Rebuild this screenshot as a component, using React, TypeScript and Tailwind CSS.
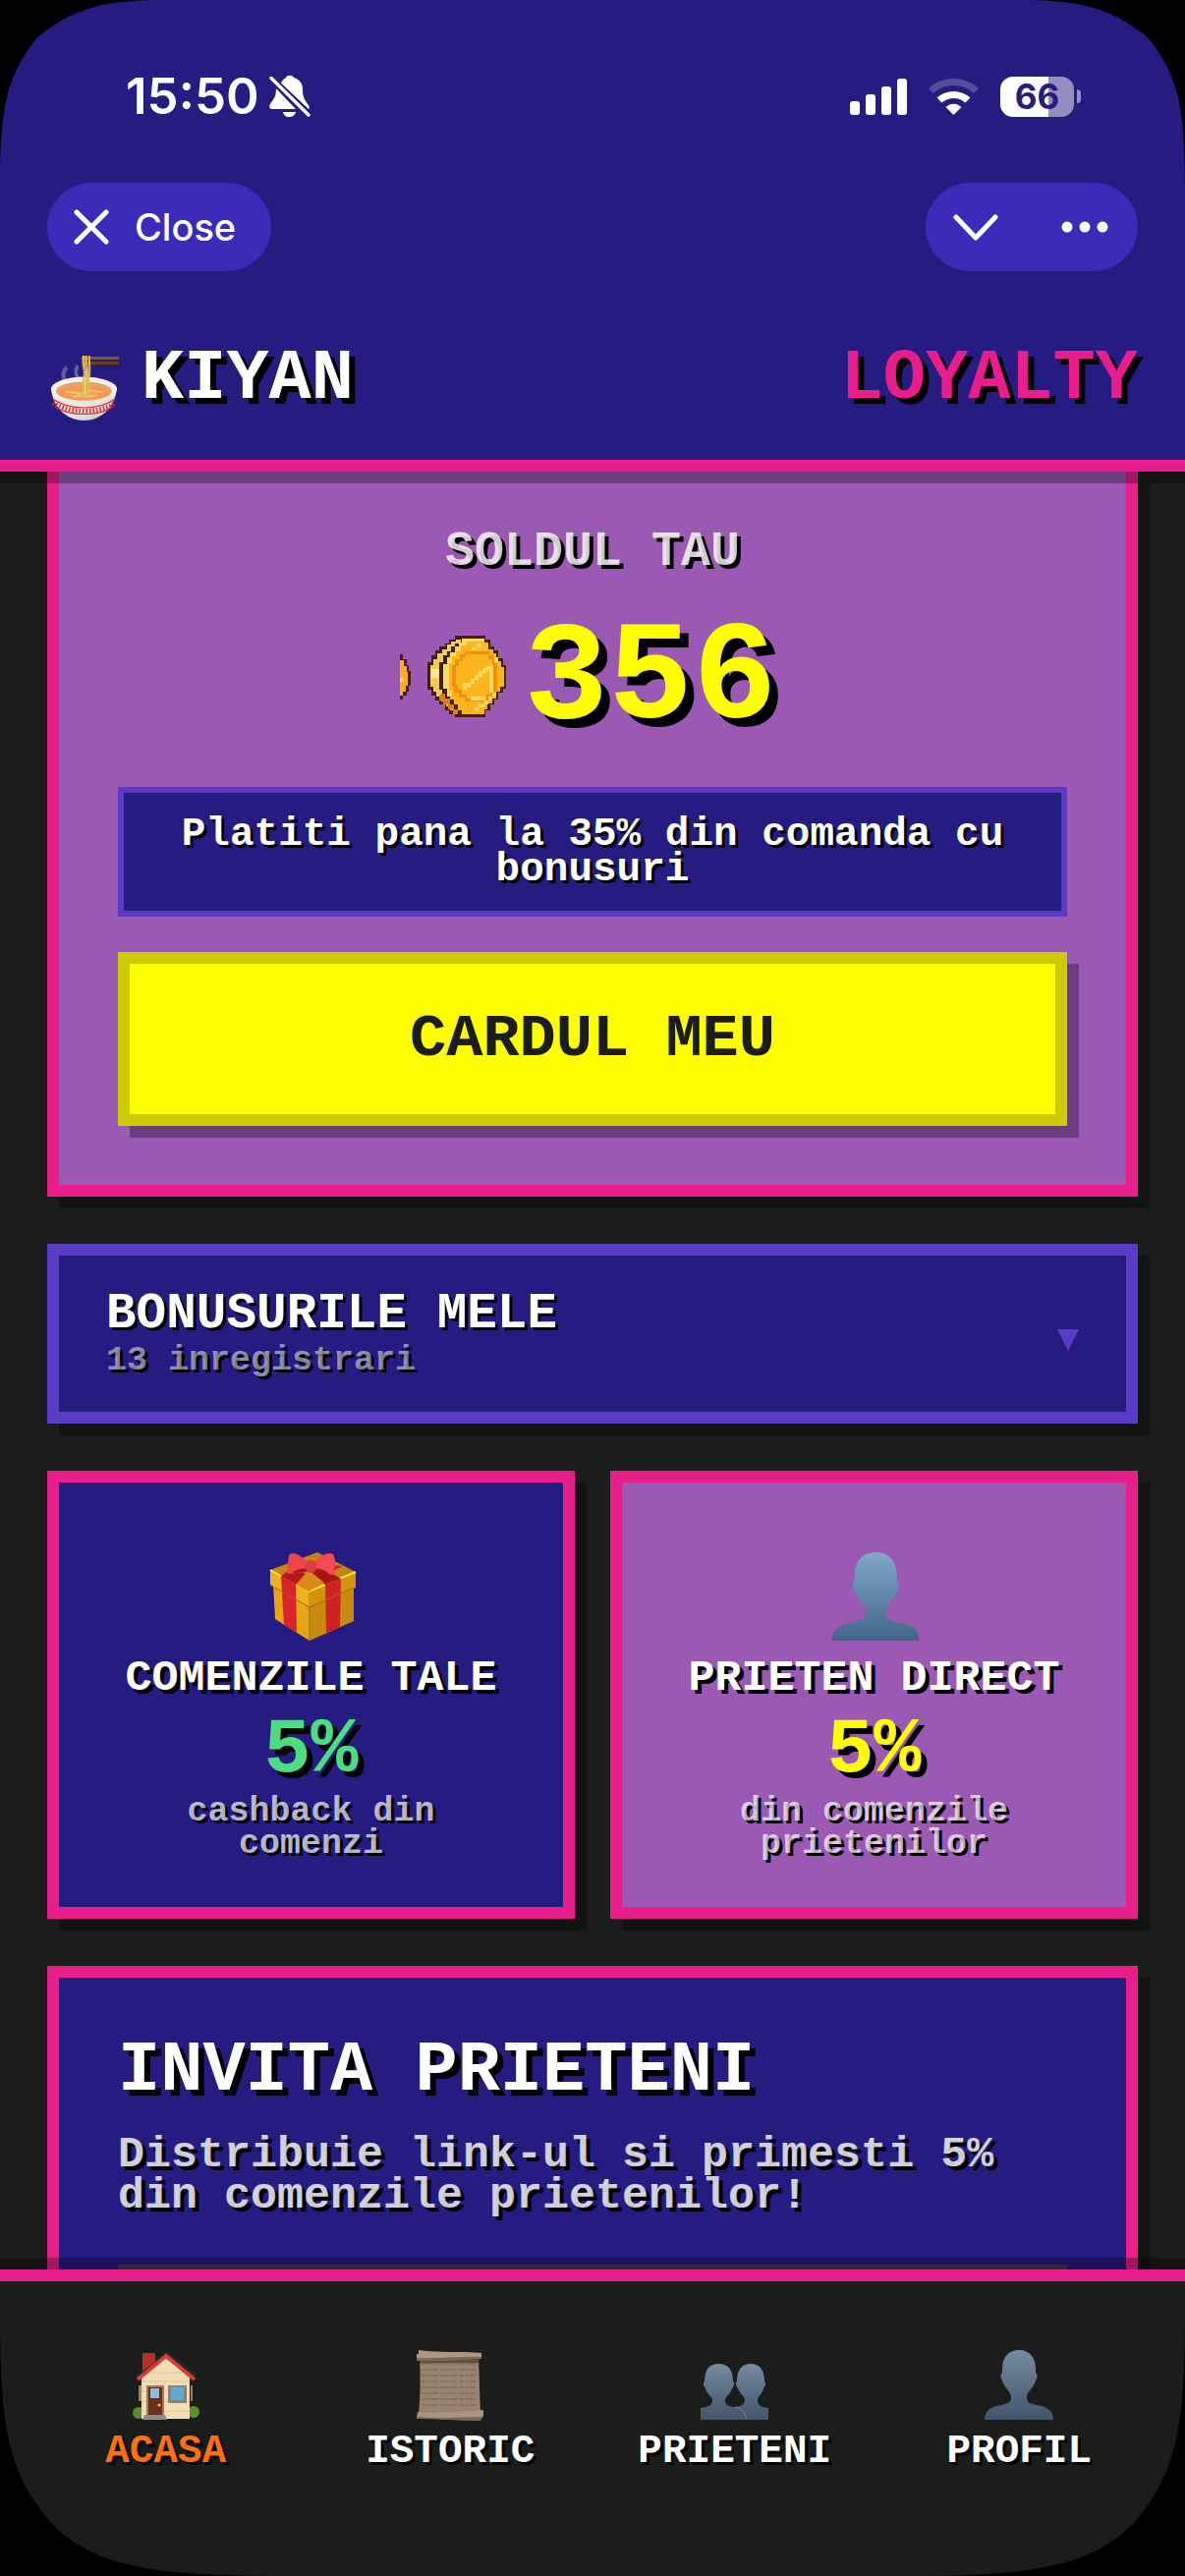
import { useState } from 'react';
import type { ReactNode } from 'react';

const PIXEL = "font-['Liberation_Mono','DejaVu_Sans_Mono',monospace] font-bold";

function BellOff() {
  return (
    <svg className="h-11 w-[42px]" viewBox="0 0 42 44" fill="#fff" aria-hidden="true">
      <path d="M12 9C13 5 16 4 17 3C18 0 24 0 25 3C31 5 34 9 34 15C34 24 37 27 40 31C41 33 41 34 40 35Z" />
      <path d="M7 14C7 24 3 26 1 30C-1 34 1 35 3 35H27Z" />
      <path d="M14 38H27C26 42 23 43 20 43C17 43 15 42 14 38Z" />
      <path d="M2 3.500L40 41" stroke="#261b81" strokeWidth="7" />
      <path d="M2 3.500L40 41" stroke="#fff" strokeWidth="3.400" strokeLinecap="round" />
    </svg>
  );
}

function Signal() {
  return (
    <svg className="h-[38px] w-[58px]" viewBox="0 0 58 38" fill="#fff" aria-hidden="true">
      <rect x="0" y="24" width="10" height="14" rx="3" />
      <rect x="16" y="17" width="10" height="21" rx="3" />
      <rect x="32" y="9" width="10" height="29" rx="3" />
      <rect x="48" y="1" width="10" height="37" rx="3" />
    </svg>
  );
}

function Wifi() {
  return (
    <svg className="h-[38px] w-[51px]" viewBox="0 0 51 38" fill="none" aria-hidden="true">
      <path d="M2.500 13.500C15 1.500 36 1.500 48.500 13.500" stroke="#fff" strokeOpacity=".22" strokeWidth="7" />
      <path d="M11 23C19 15.500 32 15.500 40 23" stroke="#fff" strokeWidth="7" />
      <path d="M17.500 30C22 25.500 29 25.500 33.500 30L25.500 38Z" fill="#fff" />
    </svg>
  );
}

function Battery() {
  return (
    <div className="flex items-center gap-[3px]">
      <div className="flex h-[41px] w-[75px] items-center justify-center rounded-[13px] bg-[linear-gradient(90deg,#fff_66%,#958dc0_66%)] font-['Inter',sans-serif] text-[35px] leading-none font-bold text-[#261b81]">
        66
      </div>
      <div className="h-3.5 w-1 rounded-r-full bg-[#958dc0]" />
    </div>
  );
}

function Bowl() {
  return (
    <svg className="h-[84px] w-[72px] overflow-visible" viewBox="-2 0 72 84" aria-hidden="true">
      <defs>
        <linearGradient id="bowl" x1="0" x2="1" y1="0" y2="1">
          <stop offset="0" stopColor="#f4f4f4" />
          <stop offset=".6" stopColor="#e4e4e2" />
          <stop offset="1" stopColor="#b9b9b9" />
        </linearGradient>
      </defs>
      <path d="M18 30C13 35 14 41 17 45M29 28C26 33 27 39 31 43" stroke="#8c86c0" strokeOpacity=".6" strokeWidth="4" fill="none" />
      <path d="M2 51C3 70 18 84 35 84C53 84 67 71 69 51Z" fill="url(#bowl)" />
      <ellipse cx="35.500" cy="52" rx="33.500" ry="12.500" fill="#f1f1f0" />
      <ellipse cx="35.500" cy="54" rx="28.500" ry="9.500" fill="#e9a36a" />
      <ellipse cx="35.500" cy="56" rx="27" ry="7.500" fill="#f59a56" />
      <path d="M16 56C24 52 29 60 37 55S49 58 55 54M24 60C32 57 39 62 48 58" stroke="#f8c36c" strokeWidth="2" fill="none" />
      <path d="M33 19H71V22H33Z" fill="#8a5520" />
      <path d="M33 24H71V27H33Z" fill="#6d3f17" />
      <path d="M35 18C33 28 38 34 35 42C34 48 36 52 35 58M38 18C37 28 41 34 38 42C37 48 39 52 38 58M41 18C40 27 43 34 40 42L41 58" stroke="#e2bd4a" strokeWidth="2" fill="none" />
      <path d="M36 18C35 28 40 34 36 42L37 58" stroke="#f9e38a" strokeWidth="1" fill="none" />
      <path d="M4 62C20 74 51 74 67 62" stroke="#db2d36" strokeWidth="1.200" fill="none" />
      <path d="M4 66C20 77 51 77 66 67" stroke="#db2d36" strokeWidth="5" strokeDasharray="1.500 2" fill="none" />
      <path d="M6 70C20 80 51 80 65 70" stroke="#db2d36" strokeWidth="1.200" fill="none" />
    </svg>
  );
}

function Coin() {
  return (
    <svg className="h-[84px] w-[114px] overflow-visible" viewBox="0 3 114 84" shapeRendering="crispEdges" aria-hidden="true">
      <path d="M0 19H3V24H7V30H9V36H11V51H9V57H7V61H3V65H0Z" fill="#3a2408" />
      <path d="M0 25H4V31H7V37H8V51H6V57H3V61H0Z" fill="#fdae15" />
      <path d="M0 43H4V47H0Z" fill="#ffd766" />
      <path d="M56 0H87V4H92V11H96V15H100V23H105V30H108V54H105V58H100V65H96V70H92V76H87V83H56V80H50V76H46V70H40V66H36V61H32V55H28V27H32V20H36V15H40V11H46V8H50V4H56Z" fill="#3a2408" />
      <path d="M57 4H62V8H56V11H52V16H48V20H44V27H40V55H43V61H46V66H50V71H54V76H58V80H55V76H51V72H47V67H42V62H37V57H34V52H31V30H34V24H38V18H43V14H48V9H52V6H57Z" fill="#f5c95c" />
      <path d="M32 34H40V43H32Z" fill="#ffe6a0" />
      <path d="M42 59H46V64H51V70H55V75H59V80H54V75H49V70H44V66H40V61Z" fill="#e07c08" />
      <path d="M63 3H86V7H90V14H95V18H98V26H103V32H106V52H102V57H98V64H94V69H89V75H86V80H63V76H59V70H55V65H51V60H48V54H44V29H48V22H51V17H56V11H60V7H63Z" fill="#fdb51f" />
      <path d="M63 3H86V6H68V10H62V16H57V21H53V28H50V56H53V62H48V54H44V29H48V22H51V17H56V11H60V7H63Z" fill="#ffd766" />
      <path d="M66 16H92V20H96V28H99V56H96V62H91V67H66V63H60V58H55V52H53V30H56V24H61V19H66Z" fill="#ee920d" />
      <path d="M67 19H90V24H94V30H95V54H92V60H88V64H68V60H63V55H59V50H57V31H60V26H64V22H67Z" fill="#fdb51f" />
      <path d="M91 31H95V58H91ZM72 62H87V66H72ZM64 48H68V55H64ZM68 48H72V52H68ZM72 44H76V49H72ZM76 40H80V45H76ZM80 36H84V42H80ZM84 33H88V38H84ZM88 31H92V35H88Z" fill="#ffd766" />
      <path d="M94 58H98V62H94ZM90 62H94V66H90ZM86 66H90V70H86ZM80 70H86V73H80ZM76 73H80V77H76ZM73 12H78V15H73ZM78 8H83V12H78ZM96 22H100V27H96Z" fill="#ffd766" />
    </svg>
  );
}

function Gift() {
  return (
    <svg className="size-[90px] overflow-visible" viewBox="-2 0 90 90" aria-hidden="true">
      <path d="M4 33L41 52V90L6 68Z" fill="#e6a417" />
      <path d="M41 52L86 32V70L41 90Z" fill="#c98b0f" />
      <path d="M1 18L40 40V56L1 33Z" fill="#eeb01c" />
      <path d="M40 40L88 20V36L40 56Z" fill="#d2940f" />
      <path d="M49 0L88 20L40 40L1 18Z" fill="#bf8612" />
      <path d="M1 18L40 40L88 20" stroke="#ffe22e" strokeWidth="2" fill="none" />
      <path d="M12 24L27 33L28 82L15 74Z" fill="#d8242a" />
      <path d="M57 33L73 27L72 76L58 83Z" fill="#d02226" />
      <path d="M12 24L26 15L40 24L27 33Z" fill="#b5171d" />
      <path d="M57 33L73 27L52 15L42 22Z" fill="#a8150f" />
      <path d="M40 18L56 31L40 40L27 33Z" fill="#db8a1c" />
      <path d="M41 56V90M6 36L41 56L86 36" stroke="#9d6a0a" strokeWidth="1" fill="none" />
      <path d="M62 13L75 14L65 19Z" fill="#c3262c" />
      <path d="M38 9C31 3 25 -1 21 2C18 6 20 17 18 20C19 25 29 19 38 20Z" fill="#ee444a" />
      <path d="M47 9C53 3 60 -1 65 2C69 8 65 17 67 21C65 26 56 20 47 20Z" fill="#f34b50" />
      <path d="M24 20C29 17 34 16 38 17V20C31 19 25 23 24 20ZM47 17C52 16 58 19 62 23C57 23 52 20 47 20Z" fill="#a3181f" />
      <rect x="37" y="8" width="11" height="13" rx="5" fill="#e03a40" />
    </svg>
  );
}

const BUST =
  'M35 0C24 0 18 8 18 19V23C16 24 16 28 18 31C20 39 27 42 27 48C27 54 23 54 18 56C8 57 0 61 0 71H70C70 61 62 57 52 56C47 54 43 54 43 48C43 42 50 39 52 31C54 28 54 24 52 23V19C52 8 46 0 35 0Z';

function Friend() {
  return (
    <svg className="size-[90px] overflow-visible" viewBox="-1 0 70 71" aria-hidden="true">
      <defs>
        <linearGradient id="friend" x1="0" x2="0" y1="0" y2="1">
          <stop offset="0" stopColor="#80a8c7" />
          <stop offset="1" stopColor="#43658a" />
        </linearGradient>
      </defs>
      <path d={BUST} fill="url(#friend)" />
    </svg>
  );
}

function Profile() {
  return (
    <svg className="size-[72px]" viewBox="0 0 70 72" aria-hidden="true">
      <defs>
        <linearGradient id="profile" x1="0" x2="0" y1="0" y2="1">
          <stop offset="0" stopColor="#768c9d" />
          <stop offset="1" stopColor="#40546b" />
        </linearGradient>
      </defs>
      <path d={BUST} fill="url(#profile)" />
    </svg>
  );
}

function People() {
  return (
    <svg className="size-[72px]" viewBox="0 0 70 72" aria-hidden="true">
      <defs>
        <linearGradient id="people" x1="0" x2="0" y1="0" y2="1">
          <stop offset="0" stopColor="#768c9d" />
          <stop offset="1" stopColor="#40546b" />
        </linearGradient>
      </defs>
      <path
        d="M51 14C42 14 37 20 37 32C35 33 36 37 38 39C40 45 45 47 45 51C45 57 38 58 35 58C40 60 46 64 46 71H69V59C64 58 58 58 58 51C58 47 63 45 64 39C66 37 67 33 65 32C65 20 60 14 51 14Z"
        fill="url(#people)"
      />
      <path
        d="M18.500 14C9 14 4 20 4 32C2 33 3 37 5 39C6 45 12 47 12 51C12 57 6 58 0 59V71H46C46 64 42 59 35 58C31 58 25 57 25 51C25 47 31 45 32 39C34 37 35 33 33 32C33 20 28 14 18.500 14Z"
        fill="url(#people)"
      />
      <path d="M35 58C42 59 46 64 46 70" stroke="#7992a3" strokeWidth="1" fill="none" />
    </svg>
  );
}

function House() {
  return (
    <svg className="size-[72px]" viewBox="-2 0 72 72" aria-hidden="true">
      <circle cx="6" cy="64" r="6" fill="#5d8c2d" />
      <circle cx="62" cy="63" r="6" fill="#5d8c2d" />
      <path d="M6 36H9V52H6ZM59 36H61V52H59Z" fill="#9b7d63" />
      <path d="M9 27L34 6L58 27V70H9Z" fill="#f3ddb6" />
      <path d="M9 32H58M9 42H58M9 52H58M9 62H58M15 23H53" stroke="#dcc49b" strokeWidth="1" />
      <path d="M4 26L34 3L64 26" stroke="#25282a" strokeWidth="3" fill="none" />
      <path d="M10 3H23V12L10 22Z" fill="#b5302a" />
      <path d="M5 30L34 6L63 30" stroke="#d63f36" strokeWidth="4" fill="none" />
      <path d="M14 36H32V67H14Z" fill="#9b7d63" />
      <path d="M16 38H30V67H16Z" fill="#6c2f1f" />
      <path d="M18 39H27V49H18Z" fill="#83c0e2" />
      <circle cx="27" cy="56" r="1.500" fill="#f2c53a" />
      <path d="M36 36H55V54H36Z" fill="#9b7d63" />
      <path d="M39 38H52V51H39Z" fill="#63a7d8" />
      <path d="M12 66H33L35 71H10Z" fill="#8f8b85" />
    </svg>
  );
}

function Scroll() {
  const lines = [14, 20, 26, 32, 38, 44, 50, 56];
  return (
    <svg className="size-[72px]" viewBox="0 0 70 72" aria-hidden="true">
      <path d="M4 8H64C65 28 65 46 66 66H3C5 46 5 28 4 8Z" fill="#988470" />
      <path d="M4 9H64V13L4 14Z" fill="#5f4f41" />
      {lines.map((y) => (
        <path key={y} d={`M6 ${y}H62`} stroke="#85725f" strokeWidth="2" strokeDasharray="5 1 3 1 7 2" />
      ))}
      <path d="M3 0C24 3 46 1 67 3V8C46 10 24 11 1 10V4H3Z" fill="#ae967f" />
      <path d="M1 8C24 9 46 6 67 7V9C46 10 24 12 1 11Z" fill="#7b6754" />
      <path d="M2 63C24 65 46 62 69 61V67L66 71C46 72 24 70 1 69Z" fill="#ab937d" />
      <path d="M1 68C24 70 46 68 67 68L66 72C46 72 24 70 1 70Z" fill="#7b6754" />
    </svg>
  );
}

interface RewardProps {
  icon: ReactNode;
  title: string;
  note: string;
  tone: string;
  valueTone: string;
}

function Reward({ icon, title, note, tone, valueTone }: RewardProps) {
  return (
    <section className={`flex flex-1 flex-col items-center border-12 border-[#ea1d8c] px-[52px] pt-[71px] pb-[47px] text-center shadow-[12px_12px_0_rgba(0,0,0,0.3)] ${tone}`}>
      {icon}
      <h3 className="mt-3 text-[45px] leading-[54px] whitespace-nowrap [text-shadow:4px_4px_0_#000]">{title}</h3>
      <p className={`my-1 text-[80px] leading-[84px] [text-shadow:6px_6px_0_#000] ${valueTone}`}>5%</p>
      <p className="text-[35px] leading-[33px] text-white/70 [text-shadow:3px_3px_0_#000]">{note}</p>
    </section>
  );
}

const TABS = [
  { id: 'home', label: 'ACASA', icon: <House /> },
  { id: 'history', label: 'ISTORIC', icon: <Scroll /> },
  { id: 'friends', label: 'PRIETENI', icon: <People /> },
  { id: 'profile', label: 'PROFIL', icon: <Profile /> },
];

export default function App() {
  const [tab, setTab] = useState('home');

  return (
    <div className={`relative flex h-screen flex-col overflow-hidden bg-[#1b1d1a] text-white ${PIXEL}`}>
      <header className="relative z-10 border-b-12 border-[#ea1d8c] bg-[#261b81] px-12 pb-10 shadow-[0_12px_0_rgba(0,0,0,0.3)]">
        {/* Status bar */}
        <div className="flex h-[186px] items-center justify-between pt-2.5 pr-[58px] pl-20 font-['Inter',sans-serif]">
          <div className="flex items-center gap-2.5">
            <span className="text-[51px] leading-[60px] font-semibold">15:50</span>
            <BellOff />
          </div>
          <div className="flex items-center gap-[22px]">
            <Signal />
            <Wifi />
            <Battery />
          </div>
        </div>

        {/* Web view controls */}
        <div className="flex h-[90px] items-stretch justify-between">
          <button className="flex items-center gap-[26px] rounded-full bg-[#3b2bb8] pr-9 pl-[27px] font-['Inter',sans-serif] text-[38px] leading-none font-medium">
            <svg className="size-9" viewBox="0 0 36 36" stroke="#fff" strokeWidth="5" strokeLinecap="round" aria-hidden="true">
              <path d="M3 3L33 33M33 3L3 33" />
            </svg>
            Close
          </button>
          <div className="flex rounded-full bg-[#3b2bb8]">
            <button aria-label="Minimize" className="flex w-[102px] items-center justify-center">
              <svg className="h-7 w-[46px]" viewBox="0 0 46 28" fill="none" stroke="#fff" strokeWidth="5" strokeLinecap="round" strokeLinejoin="round" aria-hidden="true">
                <path d="M3 4L23 25L43 4" />
              </svg>
            </button>
            <button aria-label="More" className="flex w-[114px] items-center justify-end pr-[30px]">
              <svg className="h-3 w-12" viewBox="0 0 48 12" fill="#fff" aria-hidden="true">
                <circle cx="6" cy="6" r="5.500" />
                <circle cx="24" cy="6" r="5.500" />
                <circle cx="42" cy="6" r="5.500" />
              </svg>
            </button>
          </div>
        </div>

        <div className="mt-[68px] flex h-[84px] items-center justify-between text-[72px] leading-none [text-shadow:6px_6px_0_#000]">
          <div className="flex items-center gap-6">
            <Bowl />
            <h1>KIYAN</h1>
          </div>
          <span className="text-[#ea1d8c]">LOYALTY</span>
        </div>
      </header>

      <main className="flex min-h-0 flex-1 flex-col gap-12 overflow-hidden px-12">
        {/* Balance */}
        <section className="flex shrink-0 flex-col border-12 border-t-0 border-[#ea1d8c] bg-[#9b59b4] px-[60px] pt-[52px] pb-[60px] text-center shadow-[12px_12px_0_rgba(0,0,0,0.3)]">
          <h2 className="text-[50px] leading-[60px] text-white/80 [text-shadow:4px_4px_0_#000]">SOLDUL TAU</h2>
          <div className="mt-10 flex h-[120px] items-center justify-center gap-3 pr-2">
            <Coin />
            <span className="text-[143px] leading-none text-[#ffff00] [text-shadow:9px_9px_0_#000]">356</span>
          </div>
          <p className="mt-[49px] border-6 border-[#5b3cc4] bg-[#261b81] px-10 py-6 text-[41px] leading-9 [text-shadow:3px_3px_0_#000]">
            Platiti pana la 35% din comanda cu bonusuri
          </p>
          <button className="mt-9 h-[177px] border-12 border-[#cccc00] bg-[#ffff00] text-[62px] leading-none text-[#1b1d1a] shadow-[12px_12px_0_rgba(0,0,0,0.3)]">
            CARDUL MEU
          </button>
        </section>

        {/* Bonus history toggle */}
        <button className="flex h-[183px] shrink-0 items-center justify-between border-12 border-[#5b3cc4] bg-[#261b81] px-12 text-left shadow-[12px_12px_0_rgba(0,0,0,0.3)]">
          <span className="flex flex-col gap-1.5">
            <span className="text-[51px] leading-[50px] [text-shadow:3px_3px_0_#000]">BONUSURILE MELE</span>
            <span className="text-[35px] leading-[33px] text-white/50 [text-shadow:3px_3px_0_#000]">13 inregistrari</span>
          </span>
          <svg className="mt-3 h-[22px] w-[22px]" viewBox="0 0 22 22" fill="#5b3cc4" aria-hidden="true">
            <path d="M0 0H22L11 22Z" />
          </svg>
        </button>

        <div className="flex shrink-0 gap-9">
          <Reward icon={<Gift />} title="COMENZILE TALE" note="cashback din comenzi" tone="bg-[#261b81]" valueTone="text-[#4ade80]" />
          <Reward icon={<Friend />} title="PRIETEN DIRECT" note="din comenzile prietenilor" tone="bg-[#9b59b4]" valueTone="text-[#ffff00]" />
        </div>

        {/* Invite */}
        <section className="shrink-0 border-12 border-[#ea1d8c] bg-[#261b81] px-[60px] pt-14 pb-[60px] shadow-[12px_12px_0_rgba(0,0,0,0.3)]">
          <h2 className="text-[72px] leading-[78px] [text-shadow:6px_6px_0_#000]">INVITA PRIETENI</h2>
          <p className="mt-[26px] text-[45px] leading-[42px] text-white/80 [text-shadow:4px_4px_0_#000]">
            Distribuie link-ul si primesti 5% din comenzile prietenilor!
          </p>
          <input aria-label="Link" readOnly className="mt-12 block h-[120px] w-full border-6 border-[#404040] bg-[#1b1d1a] px-9 text-[35px]" />
        </section>
      </main>

      <nav className="relative z-10 flex h-[312px] shrink-0 items-start border-t-12 border-[#ea1d8c] bg-[#1b1d1a] px-6 pt-[70px] shadow-[0_-12px_0_rgba(0,0,0,0.3)]">
        {TABS.map((t) => (
          <button
            key={t.id}
            onClick={() => setTab(t.id)}
            className={`flex flex-1 flex-col items-center gap-2.5 text-[41px] leading-[42px] [text-shadow:3px_3px_0_#000] ${tab === t.id ? 'text-[#ff6f0f]' : 'text-white'}`}
          >
            {t.icon}
            {t.label}
          </button>
        ))}
      </nav>

      {/* Rounded display corners */}
      <svg className="pointer-events-none absolute top-0 left-0 z-20 size-[200px]" viewBox="0 0 200 200" aria-hidden="true">
        <path d="M0 192C0 110 6 78 38 38C78 6 110 0 170 0H0Z" />
      </svg>
      <svg className="pointer-events-none absolute top-0 right-0 z-20 size-[200px] -scale-x-100" viewBox="0 0 200 200" aria-hidden="true">
        <path d="M0 192C0 110 6 78 38 38C78 6 110 0 170 0H0Z" />
      </svg>
      <svg className="pointer-events-none absolute bottom-0 left-0 z-20 size-[290px]" viewBox="0 0 290 290" aria-hidden="true">
        <path d="M0 20C0 140 8 185 53 237C98 282 160 290 290 290H0Z" />
      </svg>
      <svg className="pointer-events-none absolute right-0 bottom-0 z-20 size-[290px] -scale-x-100" viewBox="0 0 290 290" aria-hidden="true">
        <path d="M0 20C0 140 8 185 53 237C98 282 160 290 290 290H0Z" />
      </svg>
    </div>
  );
}
